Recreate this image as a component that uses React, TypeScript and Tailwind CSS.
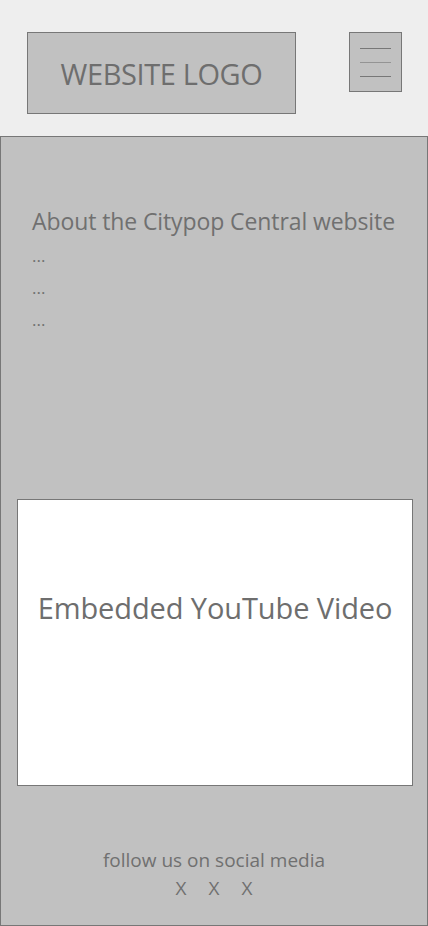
const font = { fontFamily: '"Open Sans", "Noto Sans", sans-serif' };

const Header = () => (
  <header className="h-[136px] bg-[#eeeeee] flex items-start justify-between pl-[27px] pr-[26px] pt-[32px]">
    <div className="w-[269px] h-[82px] bg-[#c1c1c1] border border-[#777777] flex items-center justify-center pt-[1px]">
      <span className="text-[29px] text-[#6e6e6e] tracking-[-0.4px]">WEBSITE LOGO</span>
    </div>
    <button className="w-[53px] h-[60px] bg-[#c1c1c1] border border-[#777777] flex flex-col items-center justify-center gap-[13px]">
      <span className="block w-[31px] h-px bg-[#777777]" />
      <span className="block w-[31px] h-px bg-[#949494]" />
      <span className="block w-[31px] h-px bg-[#777777]" />
    </button>
  </header>
);

export default function App() {
  return (
    <div className="w-[428px] h-[926px] bg-[#eeeeee] overflow-hidden" style={font}>
      <Header />
      <main className="h-[790px] bg-[#c1c1c1] border border-[#777777] flex flex-col">
        <section className="pt-[67px] pl-[31px] text-[#707070]">
          <h1 className="text-[23px] leading-[34px] tracking-[-0.1px]">About the Citypop Central website</h1>
          <p className="text-[17px] leading-[32px] pt-[2px]">...</p>
          <p className="text-[17px] leading-[32px]">...</p>
          <p className="text-[17px] leading-[32px]">...</p>
        </section>
        <div className="mt-[163px] ml-[16px] mr-[14px] h-[287px] bg-white border border-[#777777] flex justify-center pt-[88px]">
          <span className="text-[29px] leading-[40px] text-[#6e6e6e] tracking-[-0.1px]">Embedded YouTube Video</span>
        </div>
        <footer className="mt-[60px] flex flex-col items-center text-[#707070]">
          <p className="text-[19px] leading-[28px]">follow us on social media</p>
          <div className="flex gap-[22px] text-[19px] leading-[28px]">
            <span>X</span>
            <span>X</span>
            <span>X</span>
          </div>
        </footer>
      </main>
    </div>
  );
}
